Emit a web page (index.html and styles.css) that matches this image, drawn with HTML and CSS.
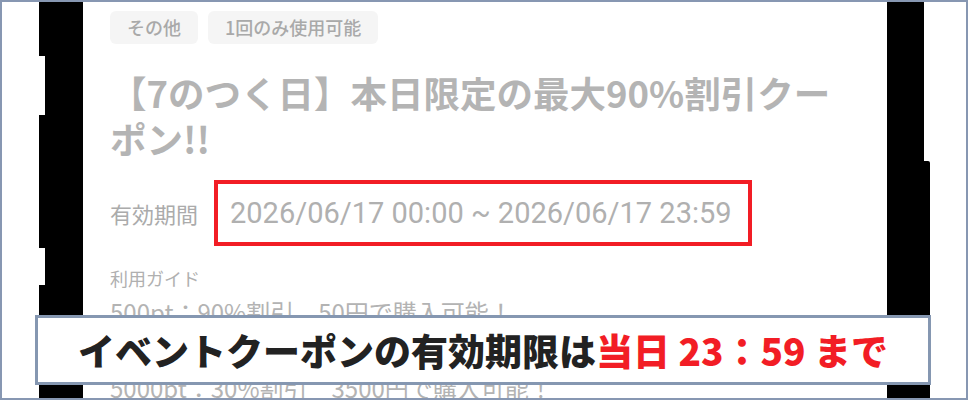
FILE: index.html
```html
<!DOCTYPE html>
<html lang="ja">
<head>
<meta charset="utf-8">
<link rel="stylesheet" href="styles.css">
</head>
<body>
<div class="frame">
  <div class="side-space left"></div>
  <div class="bezel-left">
    <div class="seg full h54"></div>
    <div class="seg btn h59"></div>
    <div class="seg full h133"></div>
    <div class="seg btn h37"></div>
    <div class="seg full grow"></div>
  </div>
  <div class="screen">
    <div class="tags">
      <span class="tag">その他</span>
      <span class="tag">1回のみ使用可能</span>
    </div>
    <h1 class="title">【7のつく日】本日限定の最大90%割引クーポン!!</h1>
    <div class="period">
      <span class="period-label">有効期間</span>
      <span class="period-box">2026/06/17 00:00 ~ 2026/06/17 23:59</span>
    </div>
    <div class="guide-head">利用ガイド</div>
    <div class="guide-line">500pt：90%割引　50円で購入可能！</div>
    <div class="guide-line later">5000pt：30%割引　3500円で購入可能！</div>
  </div>
  <div class="bezel-right">
    <div class="rseg top"></div>
    <div class="rseg bottom"></div>
  </div>
  <div class="caption">
    <span class="cap-dark">イベントクーポンの有効期限は</span><span class="cap-red">当日 23：59 まで</span>
  </div>
</div>
</body>
</html>
```
FILE: styles.css
```css
* { box-sizing: border-box; }
html, body { margin: 0; padding: 0; background: #fff; }
body { font-family: "Noto Sans CJK JP", "Noto Sans", sans-serif; }

.frame {
  position: relative;
  width: 968px;
  height: 400px;
  border: 2px solid #8797b2;
  background: #fff;
  display: flex;
  overflow: hidden;
}

.side-space.left { width: 37px; flex: none; }

.bezel-left {
  width: 44px;
  flex: none;
  display: flex;
  flex-direction: column;
  align-items: flex-end;
}
.seg { background: #000; flex: none; }
.seg.full { width: 44px; }
.seg.btn { width: 38px; }
.h54 { height: 54px; }
.h59 { height: 59px; }
.h133 { height: 133px; }
.h37 { height: 37px; }
.seg.grow { flex: 1; }

.screen {
  width: 804px;
  flex: none;
  padding: 9px 36px 0 27px;
  color: #ababab;
}

.tags { display: flex; gap: 10px; }
.tag {
  height: 33px;
  line-height: 33px;
  padding: 0 17px;
  font-size: 18px;
  font-weight: 500;
  background: #f5f5f5;
  border-radius: 6px;
  color: #a9a9a9;
}

.title {
  margin: 26px 0 0 0;
  font-size: 36.5px;
  line-height: 46px;
  font-weight: 700;
  color: #b4b4b4;
}

.period {
  margin-top: 18px;
  display: flex;
  align-items: center;
  gap: 16px;
}
.period-label {
  font-size: 22px;
  color: #ababab;
}
.period-box {
  height: 66px;
  border: 4px solid #f21d25;
  padding: 0 16px 0 12px;
  display: flex;
  align-items: center;
  font-family: "Roboto", "Liberation Sans", sans-serif;
  font-size: 29px;
  color: #b0b0b0;
  white-space: nowrap;
}

.guide-head {
  margin-top: 19px;
  font-size: 18px;
  line-height: 26px;
  color: #b0b0b0;
}
.guide-line {
  margin-top: 3px;
  font-size: 24px;
  line-height: 35px;
  color: #b3b3b3;
  white-space: nowrap;
}
.guide-line.later { margin-top: 41px; }

.bezel-right {
  width: 43px;
  flex: none;
  display: flex;
  flex-direction: column;
}
.rseg { background: #000; }
.rseg.top { width: 37px; height: 159px; }
.rseg.bottom { width: 43px; flex: 1; border-top-right-radius: 2px; }

.caption {
  position: absolute;
  left: 33px;
  top: 313px;
  width: 896px;
  height: 70px;
  border: 3px solid #8597b1;
  background: #fff;
  display: flex;
  align-items: center;
  justify-content: center;
  font-size: 37px;
  font-weight: 900;
  white-space: nowrap;
}
.cap-dark { color: #222; }
.cap-red { color: #f21d25; }
```
